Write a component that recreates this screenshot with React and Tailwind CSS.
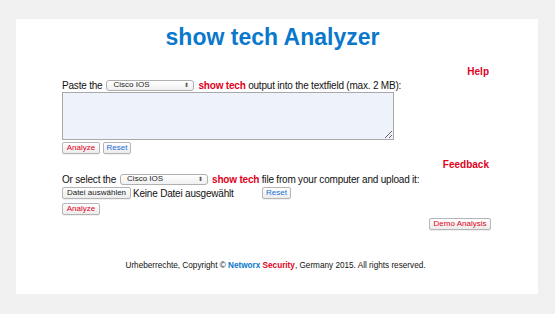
import React from "react";

const font = { fontFamily: '"Liberation Sans", Arial, sans-serif' };

const MacButton = ({ children, red, blue, className = "" }) => (
  <button
    className={`h-[12px] flex items-center justify-center whitespace-nowrap px-0 rounded-[2px] border border-[#b5b5b5] bg-gradient-to-b from-white to-[#ececec] text-[8px] leading-[10px] shadow-[0_1px_0_rgba(0,0,0,0.06)] ${
      red ? "text-[#e0001b]" : blue ? "text-[#1a6fd6]" : "text-[#222]"
    } ${className}`}
  >
    {children}
  </button>
);

const FakeSelect = ({ width }) => (
  <div
    className={`h-[11px] ${width} flex items-center justify-between rounded-[3px] border border-[#b0b0b0] bg-gradient-to-b from-white to-[#f0f0f0] pl-[6px] pr-[4px] text-[8px] tracking-normal text-[#222]`}
  >
    <span>Cisco IOS</span>
    <span className="text-[6px] leading-none text-[#555]">⬍</span>
  </div>
);

const App = () => {
  return (
    <div className="min-h-[314px] w-[555px] bg-[#f0f0f0] pt-[19px] pl-[16px]" style={font}>
      <div className="w-[522px] h-[275px] bg-white pl-[46px] pr-[49px] pt-[5px]">
        <h1 className="h-[27px] pr-[6px] text-center text-[23px] leading-[27px] font-bold text-[#0a78cc]">
          show tech Analyzer
        </h1>

        <div className="mt-[15px] h-[12px] text-right text-[10px] leading-[12px] font-bold text-[#e0001b]">
          Help
        </div>

        <div className="mt-[1px] flex h-[12px] items-center gap-[4px] text-[10px] tracking-[-0.2px] text-[#111]">
          <span>Paste the</span>
          <FakeSelect width="w-[88px]" />
          <span>
            <b className="text-[#e0001b]">show tech</b> output into the textfield (max. 2 MB):
          </span>
        </div>

        <textarea className="mt-[1px] block h-[48px] w-[332px] resize border border-[#a9a9a9] bg-[#eef3fb]"></textarea>

        <div className="mt-[2px] flex gap-[3px]">
          <MacButton red className="w-[38px]">Analyze</MacButton>
          <MacButton blue className="w-[28px]">Reset</MacButton>
        </div>

        <div className="mt-[5px] h-[12px] text-right text-[10px] leading-[12px] font-bold text-[#e0001b]">
          Feedback
        </div>

        <div className="mt-[2px] flex h-[12px] items-center gap-[4px] text-[10px] tracking-[-0.2px] text-[#111]">
          <span>Or select the</span>
          <FakeSelect width="w-[88px]" />
          <span>
            <b className="text-[#e0001b]">show tech</b> file from your computer and upload it:
          </span>
        </div>

        <div className="mt-[2px] flex h-[12px] items-center text-[10px] tracking-[-0.2px] text-[#111]">
          <MacButton className="w-[69px] tracking-normal">Datei auswählen</MacButton>
          <span className="ml-[2px] w-[129px]">Keine Datei ausgewählt</span>
          <MacButton blue className="w-[29px] tracking-normal">Reset</MacButton>
        </div>

        <div className="mt-[4px] flex">
          <MacButton red className="w-[38px]">Analyze</MacButton>
        </div>

        <div className="mt-[3px] flex justify-end">
          <MacButton red className="w-[62px] -mr-[2px]">Demo Analysis</MacButton>
        </div>

        <p className="mt-[30px] text-center text-[8.2px] text-[#111]">
          Urheberrechte, Copyright © <b className="text-[#0a78cc]">Networx</b>{" "}
          <b className="text-[#e0001b]">Security</b>, Germany 2015. All rights reserved.
        </p>
      </div>
    </div>
  );
};

export default App;
